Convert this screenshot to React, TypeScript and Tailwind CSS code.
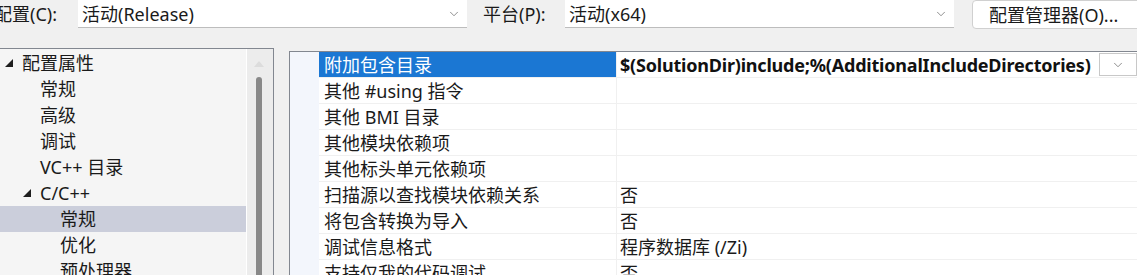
import { ChevronDown } from 'lucide-react';

const font = { fontFamily: '"Noto Sans", "Noto Sans CJK SC", sans-serif' };

type TreeItem = { label: string; level: number; expanded?: boolean; selected?: boolean };

const tree: TreeItem[] = [
  { label: '配置属性', level: 0, expanded: true },
  { label: '常规', level: 1 },
  { label: '高级', level: 1 },
  { label: '调试', level: 1 },
  { label: 'VC++ 目录', level: 1 },
  { label: 'C/C++', level: 1, expanded: true },
  { label: '常规', level: 2, selected: true },
  { label: '优化', level: 2 },
  { label: '预处理器', level: 2 },
];

const props: [string, string][] = [
  ['附加包含目录', '$(SolutionDir)include;%(AdditionalIncludeDirectories)'],
  ['其他 #using 指令', ''],
  ['其他 BMI 目录', ''],
  ['其他模块依赖项', ''],
  ['其他标头单元依赖项', ''],
  ['扫描源以查找模块依赖关系', '否'],
  ['将包含转换为导入', '否'],
  ['调试信息格式', '程序数据库 (/Zi)'],
  ['支持仅我的代码调试', '否'],
];

function Triangle() {
  return (
    <svg width="8" height="8" viewBox="0 0 8 8" className="shrink-0">
      <polygon points="8,0 8,8 0,8" fill="#1e1e1e" />
    </svg>
  );
}

function Combo({ value }: { value: string }) {
  return (
    <div className="w-[389px] shrink-0 h-[28px] bg-white border-b border-[#bdbdbd] flex items-center pl-[4px] pr-[6px]">
      <span className="flex-1 text-[#1a1a1a] whitespace-nowrap">{value}</span>
      <ChevronDown size={14} strokeWidth={1.2} className="text-[#606060]" />
    </div>
  );
}

export default function App() {
  return (
    <div style={font} className="w-[1137px] h-[275px] bg-[#f0f0f0] overflow-hidden text-[18px] leading-none text-[#1a1a1a]">
      {/* top bar */}
      <div className="flex h-[48px] items-start whitespace-nowrap">
        <div className="h-[28px] flex items-center ml-[-6px] w-[84px] shrink-0">配置(C):</div>
        <Combo value="活动(Release)" />
        <div className="h-[28px] flex items-center ml-[16px] w-[82px] shrink-0">平台(P):</div>
        <Combo value="活动(x64)" />
        <div className="ml-[18px] h-[29px] w-[190px] bg-white border border-[#d0d0d0] rounded-[4px] flex items-center pl-[16px] shrink-0">
          配置管理器(O)...
        </div>
      </div>

      <div className="flex items-start">
        {/* tree panel */}
        <div className="w-[274px] shrink-0 h-[227px] border-t border-r border-[#828790] flex">
          <div className="w-[246px] bg-[#f5f5f5] pt-[1px]">
            {tree.map((t, i) => (
              <div
                key={i}
                className={`h-[26px] flex items-center whitespace-nowrap ${t.selected ? 'bg-[#cbcedb]' : ''}`}
                style={{ paddingLeft: t.level === 0 ? 5 : t.level === 1 ? (t.expanded ? 23 : 40) : 60 }}
              >
                {t.expanded && <Triangle />}
                <span className={t.expanded ? 'ml-[9px]' : ''}>{t.label}</span>
              </div>
            ))}
          </div>
          <div className="w-px bg-white" />
          <div className="flex-1 bg-[#ececec] flex flex-col items-center pt-[12px] pr-[2px]">
            <svg width="10" height="6" viewBox="0 0 10 6">
              <polygon points="5,0 10,6 0,6" fill="#dcdcdc" />
            </svg>
            <div className="mt-[10px] w-[6px] flex-1 bg-[#888888] rounded-t-[3px]" />
          </div>
        </div>

        {/* property grid */}
        <div className="ml-[15px] mt-[3px] w-[880px] shrink-0 h-[224px] border-t border-l border-[#828790] flex bg-white">
          <div className="w-[29px] shrink-0 bg-[#f3f6fc]" />
          <div className="w-[850px] shrink-0">
            {props.map(([name, value], i) => (
              <div key={i} className="h-[26px] flex border-b border-[#f0f0f0] whitespace-nowrap">
                <div
                  className={`w-[298px] shrink-0 flex items-center pl-[5px] border-r border-[#f0f0f0] ${i === 0 ? 'bg-[#1b77d3] text-white' : ''}`}
                >
                  {name}
                </div>
                <div className="w-[520px] shrink-0 flex items-center pl-[3px]">
                  <span className={i === 0 ? 'font-bold text-[#111] flex-1 tracking-[-0.2px]' : 'flex-1'}>{value}</span>
                  {i === 0 && (
                    <div className="w-[38px] h-[23px] border border-[#c8c8c8] bg-white flex items-center justify-center shrink-0">
                      <ChevronDown size={14} strokeWidth={1.2} className="text-[#606060]" />
                    </div>
                  )}
                </div>
              </div>
            ))}
          </div>
        </div>
      </div>
    </div>
  );
}
